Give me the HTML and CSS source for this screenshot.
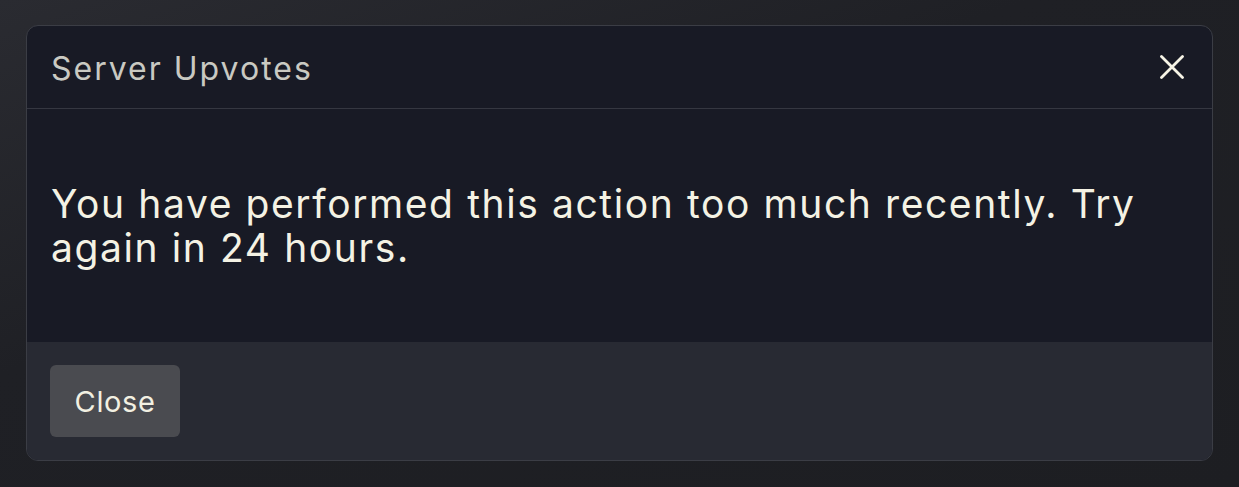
FILE: index.html
```html
<!DOCTYPE html>
<html>

<head>
    <title>Server Upvotes</title>
    <link rel="stylesheet" href="styles.css">
</head>

<body>
    <div class="modal">
        <div class="modal-header">
            <h5 class="modal-title">Server Upvotes</h5>
            <button type="button" class="btn-close" aria-label="Close">
                <svg width="24" height="24" viewBox="0 0 24 24">
                    <path d="M1.5 1.5 L22.5 22.5 M22.5 1.5 L1.5 22.5" stroke="#f6f4e6" stroke-width="2.8" stroke-linecap="round" fill="none"/>
                </svg>
            </button>
        </div>
        <div class="modal-body">
            <p>You have performed this action too much recently. Try again in 24 hours.</p>
        </div>
        <div class="modal-footer">
            <button type="button" class="btn-secondary">Close</button>
        </div>
    </div>
</body>

</html>
```

FILE: styles.css
```css
body {
    font-family: Inter, "Noto Sans", sans-serif;
    margin: 0;
    padding: 25px 26px 0 26px;
    height: 487px;
    box-sizing: border-box;
    background: linear-gradient(160deg, #2a2b31 0%, #1f2025 40%, #1d1e22 100%);
    overflow: hidden;
}

.modal {
    width: 1187px;
    box-sizing: border-box;
    border: 1px solid #3b3d45;
    border-radius: 12px;
    overflow: hidden;
    background-color: #181a25;
}

.modal-header {
    height: 83px;
    box-sizing: border-box;
    border-bottom: 1px solid #353741;
    padding: 0 28px 0 24px;
    display: flex;
    align-items: center;
    justify-content: space-between;
}

.modal-title {
    margin: 0;
    font-size: 32px;
    font-weight: 400;
    letter-spacing: 2px;
    color: #c9c9c2;
    padding-top: 2px;
}

.btn-close {
    background: none;
    border: none;
    padding: 0;
    width: 24px;
    height: 24px;
    cursor: pointer;
    display: flex;
}

.modal-body {
    height: 233px;
    box-sizing: border-box;
    padding: 0 60px 0 24px;
    display: flex;
    align-items: center;
}

.modal-body p {
    margin: 0;
    font-size: 39px;
    line-height: 44px;
    letter-spacing: 1.6px;
    color: #f4f2e4;
}

.modal-footer {
    background-color: #282a33;
    padding: 23px 23px 23px 23px;
}

.btn-secondary {
    width: 130px;
    height: 72px;
    background-color: #4a4b50;
    color: #f2f0e2;
    border: none;
    border-radius: 6px;
    font-family: Inter, "Noto Sans", sans-serif;
    font-size: 29px;
    letter-spacing: 0.6px;
    cursor: pointer;
}
```
